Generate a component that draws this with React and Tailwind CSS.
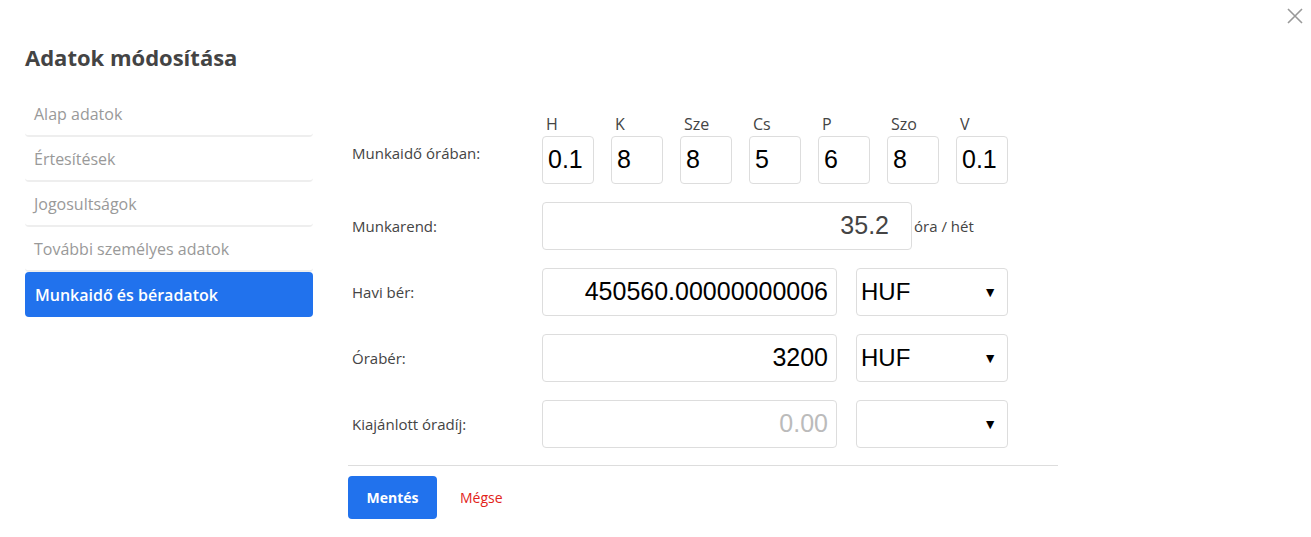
import React from "react";

const days = [["H","0.1"],["K","8"],["Sze","8"],["Cs","5"],["P","6"],["Szo","8"],["V","0.1"]];
const sans = { fontFamily: '"Open Sans", "Liberation Sans", sans-serif' };

function Row({ label, children, mt }) {
  return (
    <div className={`flex items-center ${mt}`}>
      <div className="w-[194px] pl-[4px] text-[15px] font-medium text-[#444]">{label}</div>
      {children}
    </div>
  );
}

function Sel({ v }) {
  return (
    <div className="ml-[19px] w-[152px] h-[48px] border border-[#ddd] rounded-[4px] flex items-center justify-between px-[4px] text-[24px] text-black" style={{ fontFamily: '"Liberation Sans", Arial, sans-serif' }}>
      <span>{v}</span>
      <span className="text-[14px] pr-[6px]">▼</span>
    </div>
  );
}

export default function App() {
  const arial = { fontFamily: '"Liberation Sans", Arial, sans-serif' };
  return (
    <div className="relative w-[1311px] h-[537px] bg-white" style={sans}>
      <div className="absolute right-[6px] top-[6px] text-[#999]">
        <svg width="20" height="20" viewBox="0 0 20 20"><path d="M3 3L17 17M17 3L3 17" stroke="#999" strokeWidth="1.6" /></svg>
      </div>
      <div className="pl-[25px] pt-[40px]">
        <h1 className="text-[22px] font-bold text-[#444] leading-[34px]">Adatok módosítása</h1>
        <div className="flex mt-[18px]">
          <div className="w-[288px]">
            {["Alap adatok","Értesítések","Jogosultságok","További személyes adatok"].map(t => (
              <div key={t} className="h-[45px] flex items-center pl-[9px] text-[16px] font-medium text-[#999] border-b-2 border-[#eee] rounded-b-[4px]">{t}</div>
            ))}
            <div className="h-[45px] flex items-center pl-[10px] text-[16px] font-semibold text-white bg-[#2172ed] rounded-[4px]">Munkaidő és béradatok</div>
          </div>
          <div className="ml-[35px] w-[710px] pt-[20px]">
            <div className="flex items-end">
              <div className="w-[194px] pl-[4px] text-[15px] font-medium text-[#444] h-[48px] flex items-center pb-[14px]">Munkaidő órában:</div>
              <div className="flex gap-[17px]">
                {days.map(([d, v]) => (
                  <div key={d} className="w-[52px]">
                    <div className="text-[16px] font-medium text-[#444] pl-[4px] leading-[24px]">{d}</div>
                    <div className="h-[48px] border border-[#ddd] rounded-[4px] flex items-center pl-[5px] text-[25px] text-black overflow-hidden" style={arial}>{v}</div>
                  </div>
                ))}
              </div>
            </div>
            <Row label="Munkarend:" mt="mt-[18px]">
              <div className="w-[370px] h-[48px] border border-[#ddd] rounded-[4px] flex items-center justify-end pr-[22px] text-[25px] text-[#444]" style={arial}>35.2</div>
              <span className="ml-[2px] text-[15px] font-medium text-[#444]">óra / hét</span>
            </Row>
            <Row label="Havi bér:" mt="mt-[18px]">
              <div className="w-[295px] h-[48px] border border-[#ddd] rounded-[4px] flex items-center justify-end pr-[8px] text-[25px] text-black" style={arial}>450560.00000000006</div>
              <Sel v="HUF" />
            </Row>
            <Row label="Órabér:" mt="mt-[18px]">
              <div className="w-[295px] h-[48px] border border-[#ddd] rounded-[4px] flex items-center justify-end pr-[8px] text-[25px] text-black" style={arial}>3200</div>
              <Sel v="HUF" />
            </Row>
            <Row label="Kiajánlott óradíj:" mt="mt-[18px]">
              <div className="w-[295px] h-[48px] border border-[#ddd] rounded-[4px] flex items-center justify-end pr-[8px] text-[25px] text-[#bbb]" style={arial}>0.00</div>
              <Sel v="" />
            </Row>
            <div className="border-t border-[#ddd] mt-[17px] w-[710px]" />
            <div className="flex items-center mt-[10px]">
              <div className="w-[89px] h-[43px] bg-[#2172ed] rounded-[4px] text-white text-[14px] font-bold flex items-center justify-center">Mentés</div>
              <span className="ml-[23px] text-[14px] text-[#e2231a]">Mégse</span>
            </div>
          </div>
        </div>
      </div>
    </div>
  );
}
